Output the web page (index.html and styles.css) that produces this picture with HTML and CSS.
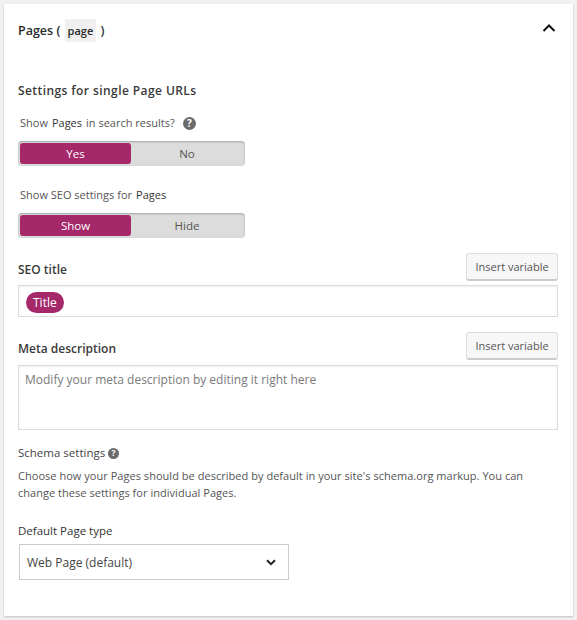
FILE: index.html
```html
<!DOCTYPE html>
<html lang="en">
<head>
  <meta charset="UTF-8" />
  <title>Pages settings</title>
  <link rel="stylesheet" href="styles.css">
</head>
<body>
  <div class="panel">
    <div class="panel-header">
      <h2>Pages ( <code>page</code> )</h2>
      <svg class="chevron" width="14" height="10" viewBox="0 0 14 10"><path d="M1.5 8 7 2.5 12.5 8" fill="none" stroke="#111" stroke-width="2"/></svg>
    </div>

    <h3 class="section-title">Settings for single Page URLs</h3>

    <div class="toggle-label first">Show <b>Pages</b> in search results?
      <svg class="help help-big" width="13" height="13" viewBox="0 0 13 13"><circle cx="6.5" cy="6.5" r="6.5" fill="#6b6b6b"/><text x="6.5" y="10" text-anchor="middle" class="help-mark">?</text></svg>
    </div>
    <div class="toggle">
      <span class="toggle-on">Yes</span>
      <span class="toggle-off">No</span>
    </div>

    <div class="toggle-label second">Show SEO settings for <b>Pages</b></div>
    <div class="toggle">
      <span class="toggle-on">Show</span>
      <span class="toggle-off">Hide</span>
    </div>

    <div class="field-head first-field">
      <label>SEO title</label>
      <button>Insert variable</button>
    </div>
    <div class="input title-input"><span class="pill">Title</span></div>

    <div class="field-head">
      <label>Meta description</label>
      <button>Insert variable</button>
    </div>
    <div class="input meta-input">Modify your meta description by editing it right here</div>

    <div class="schema-title">Schema settings
      <svg class="help" width="11" height="11" viewBox="0 0 13 13"><circle cx="6.5" cy="6.5" r="6.5" fill="#6b6b6b"/><text x="6.5" y="10" text-anchor="middle" class="help-mark">?</text></svg>
    </div>
    <p class="schema-text">Choose how your Pages should be described by default in your site's schema.org markup. You can change these settings for individual Pages.</p>

    <label class="select-label">Default Page type</label>
    <div class="select">
      <span>Web Page (default)</span>
      <svg width="10" height="7" viewBox="0 0 10 7"><path d="M1 1.2 5 5.2 9 1.2" fill="none" stroke="#222" stroke-width="2"/></svg>
    </div>
  </div>
</body>
</html>
```

FILE: styles.css
```css
* {
  margin: 0;
  padding: 0;
  box-sizing: border-box;
}
html, body {
  background: #f1f1f1;
  font-family: "Open Sans", sans-serif;
  color: #444;
  overflow: hidden;
}
body {
  padding: 4px 4px 0 4px;
  height: 620px;
}

/* panel */
.panel {
  width: 569px;
  height: 612px;
  background: #fff;
  box-shadow: 0 1px 2px rgba(0,0,0,0.2);
  padding: 0 15px 0 14px;
}
.panel-header {
  height: 52px;
  display: flex;
  align-items: center;
  justify-content: space-between;
  padding-right: 2px;
}
.panel-header h2 {
  font-size: 12.5px;
  font-weight: 600;
  color: #2a2a2a;
}
.panel-header code {
  font-family: "Open Sans", sans-serif;
  font-size: 11px;
  background: #f0f0f0;
  padding: 4px 3px;
  margin: 0 1px;
}
.chevron {
  margin-top: -4px;
}
.section-title {
  margin-top: 27px;
  font-size: 12px;
  line-height: 16px;
  font-weight: 600;
  color: #3a3a3a;
  letter-spacing: 0.42px;
}

/* toggles */
.toggle-label {
  margin-left: 2px;
  font-size: 11px;
  line-height: 16px;
  color: #555;
  display: flex;
  align-items: center;
  gap: 4px;
}
.toggle-label b {
  font-weight: 500;
  color: #333;
}
.toggle-label.first {
  margin-top: 16px;
}
.toggle-label.second {
  margin-top: 21px;
}
.help {
  flex: none;
}
.help-big {
  margin-left: 4px;
}
.help-mark {
  font-size: 10px;
  font-weight: 700;
  fill: #fff;
}
.toggle {
  margin-top: 10px;
  width: 227px;
  height: 25px;
  padding: 2px;
  background: #dcdcdc;
  border-radius: 4px;
  box-shadow: inset 0 1px 2px rgba(0,0,0,0.25);
  display: flex;
  font-size: 11.5px;
  line-height: 21px;
  text-align: center;
}
.toggle-on {
  width: 111px;
  background: #a4286a;
  color: #fff;
  border-radius: 3px;
}
.toggle-off {
  flex: 1;
  color: #555;
}

/* fields */
.field-head {
  display: flex;
  align-items: center;
  justify-content: space-between;
  height: 28px;
  margin-top: 15px;
}
.field-head label {
  font-size: 12px;
  font-weight: 600;
  color: #3a3a3a;
  margin-top: 5px;
}
.field-head button {
  width: 92px;
  height: 28px;
  background: #f7f7f7;
  border: 1px solid #ddd;
  border-bottom: 2px solid #ccc;
  border-radius: 3px;
  font-family: "Open Sans", sans-serif;
  font-size: 11px;
  color: #555;
}
.input {
  border: 1px solid #ddd;
  box-shadow: inset 0 1px 2px rgba(0,0,0,0.07);
}
.title-input {
  margin-top: 4px;
  height: 32px;
  padding: 4px 7px;
}
.pill {
  display: inline-block;
  height: 21px;
  padding: 0 7px;
  background: #a4286a;
  color: #fff;
  border-radius: 11px;
  font-size: 12px;
  line-height: 21px;
}
.meta-input {
  margin-top: 5px;
  height: 65px;
  padding: 5px 6px;
  font-size: 12px;
  line-height: 18px;
  color: #7a7a7a;
}

/* schema */
.schema-title {
  margin-top: 15px;
  font-size: 11.5px;
  line-height: 16px;
  font-weight: 500;
  color: #444;
  display: flex;
  align-items: center;
  gap: 3px;
}
.schema-text {
  margin-top: 6px;
  font-size: 11px;
  line-height: 17px;
  letter-spacing: 0.033px;
  color: #555;
}
.select-label {
  display: block;
  margin-top: 22px;
  font-size: 11.5px;
  line-height: 16px;
  font-weight: 500;
  color: #333;
}
.select {
  margin: 5px 0 0 1px;
  width: 270px;
  height: 36px;
  border: 1px solid #ccc;
  padding: 0 12px 0 7px;
  display: flex;
  align-items: center;
  justify-content: space-between;
  font-size: 12px;
  color: #444;
}
```
